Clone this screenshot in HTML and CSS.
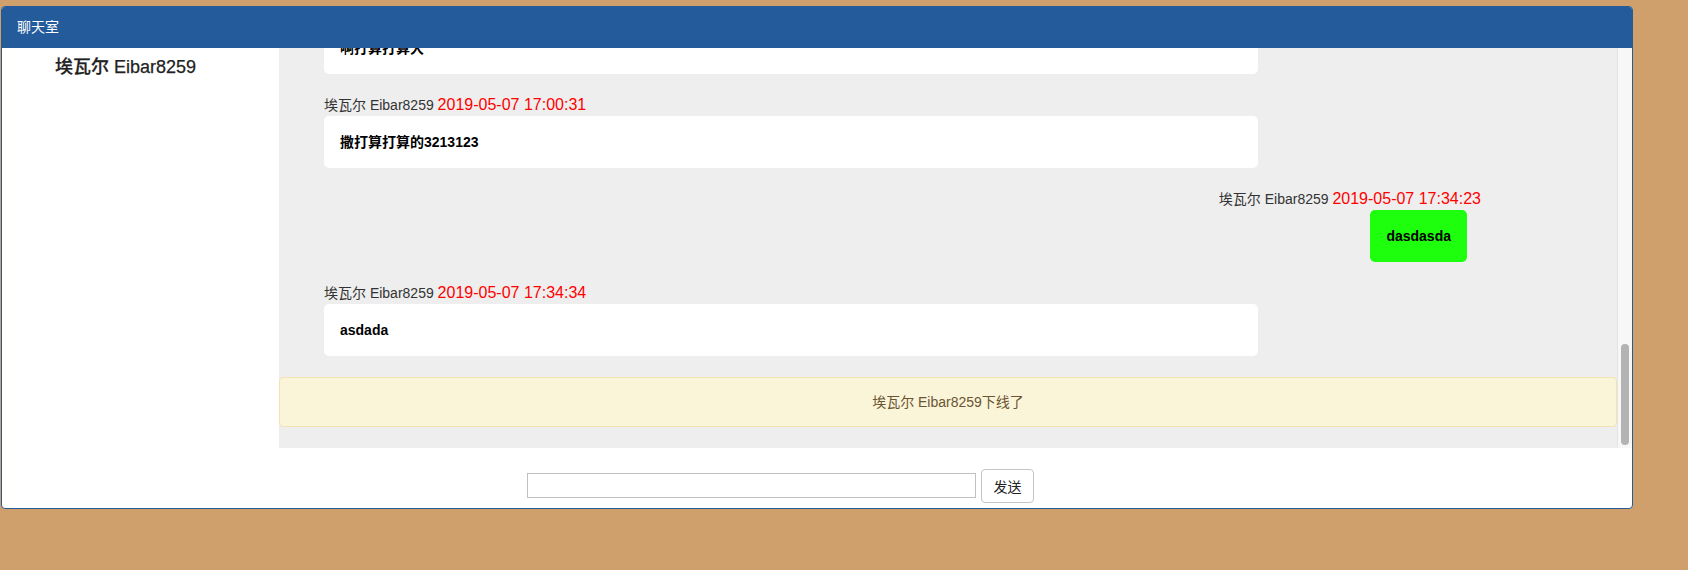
FILE: index.html
```html
<!DOCTYPE html>
<html lang="zh-CN">
<head>
<meta charset="utf-8">
<title>聊天室</title>
<link rel="stylesheet" href="styles.css">
</head>
<body>
<div class="panel">
  <div class="panel-heading">聊天室</div>
  <div class="panel-body">
    <div class="main">
      <aside class="sidebar">
        <h4 class="me">埃瓦尔 Eibar8259</h4>
      </aside>
      <section class="chat">
        <div class="chat-scroll">
          <div class="msg msg-left">
            <div class="bubble">啊打算打算大</div>
          </div>
          <div class="msg msg-left">
            <div class="meta"><span class="who">埃瓦尔 Eibar8259</span> <span class="time">2019-05-07 17:00:31</span></div>
            <div class="bubble">撒打算打算的3213123</div>
          </div>
          <div class="msg msg-right">
            <div class="meta"><span class="who">埃瓦尔 Eibar8259</span> <span class="time">2019-05-07 17:34:23</span></div>
            <div class="bubble bubble-mine">dasdasda</div>
          </div>
          <div class="msg msg-left">
            <div class="meta"><span class="who">埃瓦尔 Eibar8259</span> <span class="time">2019-05-07 17:34:34</span></div>
            <div class="bubble">asdada</div>
          </div>
          <div class="notice">埃瓦尔 Eibar8259下线了</div>
        </div>
        <div class="scrollbar"><div class="thumb"></div></div>
      </section>
    </div>
    <form class="composer">
      <input class="composer-input" type="text">
      <button class="composer-btn" type="button">发送</button>
    </form>
  </div>
</div>
</body>
</html>
```

FILE: styles.css
```css
* { box-sizing: border-box; }

html, body {
  margin: 0;
  padding: 0;
}

body {
  background: #cfa06b;
  font-family: "Liberation Sans", "Noto Sans CJK SC", sans-serif;
  font-size: 14px;
  color: #333;
  padding: 6px 0 0 1px;
}

.panel {
  width: 1632px;
  background: #fff;
  border: 1px solid #245b9b;
  border-radius: 4px;
  overflow: hidden;
}

.panel-heading {
  height: 41px;
  line-height: 41px;
  padding: 0 15px;
  background: #245b9b;
  color: #fff;
  font-size: 14px;
}

.main {
  display: flex;
  height: 400px;
}

.sidebar {
  width: 277px;
  flex: none;
  background: #fff;
}

.me {
  margin: 9px 0 0;
  padding-left: 53px;
  font-size: 18px;
  line-height: 20px;
  font-weight: 500;
  color: #222;
  -webkit-text-stroke: 0.25px #222;
}

.chat {
  flex: 1;
  display: flex;
  background: #eee;
}

.chat-scroll {
  flex: 1;
  overflow: hidden;
  display: flex;
  flex-direction: column;
  justify-content: flex-end;
  padding-bottom: 21px;
}

.msg {
  flex: none;
  display: flex;
  flex-direction: column;
  padding-top: 20px;
}

.msg-left {
  align-items: flex-start;
  padding-left: 45px;
}

.msg-right {
  align-items: flex-end;
}

.meta {
  height: 22px;
  line-height: 22px;
  white-space: nowrap;
}

.msg-right .meta {
  margin-right: 136px;
}

.who {
  font-size: 14px;
  color: #333;
}

.time {
  font-size: 16px;
  color: #ff0000;
}

.bubble {
  width: 934px;
  background: #fff;
  border-radius: 5px;
  padding: 16px;
  line-height: 20px;
  font-weight: bold;
  color: #000;
}

.bubble-mine {
  width: auto;
  background: #1eff0d;
  margin-right: 150px;
  text-align: center;
}

.notice {
  flex: none;
  margin-top: 21px;
  height: 50px;
  line-height: 48px;
  text-align: center;
  background: #faf4d9;
  border: 1px solid #f4e2b3;
  border-radius: 4px;
  color: #6b5431;
}

.scrollbar {
  width: 15px;
  flex: none;
  background: #f7f7f7;
  border-left: 1px solid #e4e4e4;
  padding: 296px 0 0 3px;
}

.thumb {
  width: 8px;
  height: 101px;
  border-radius: 4px;
  background: #b3b3b3;
}

.composer {
  margin: 0;
  height: 60px;
  display: flex;
  align-items: center;
  gap: 5px;
  padding: 15px 0 0 525px;
}

.composer-input {
  width: 449px;
  height: 25px;
  border: 1px solid #c0c0c0;
  margin: 0;
  padding: 0 4px;
  font: inherit;
}

.composer-btn {
  width: 53px;
  height: 34px;
  margin: 0;
  padding: 0;
  background: #fff;
  border: 1px solid #c4c4c4;
  border-radius: 4px;
  font-family: "Liberation Sans", "Noto Sans CJK SC", sans-serif;
  font-size: 14px;
  color: #222;
}
```
